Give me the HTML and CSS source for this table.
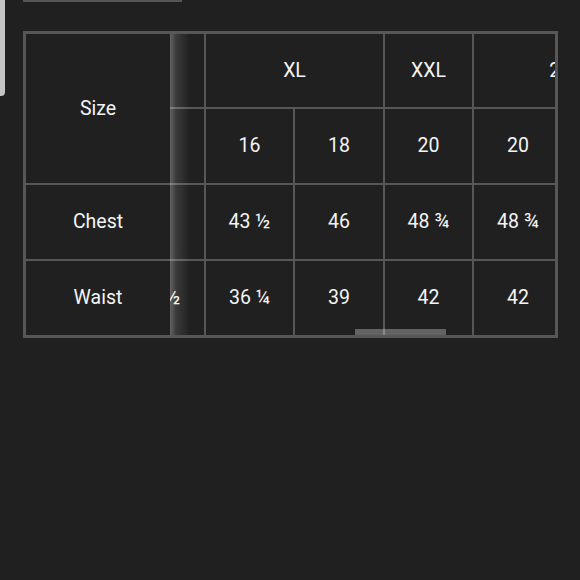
FILE: index.html
```html
<!DOCTYPE html>
<html>
<head>
<meta charset="utf-8">
<link rel="stylesheet" href="styles.css">
</head>
<body>
<div class="page">
  <div class="side-tab"></div>
  <div class="content">
    <div class="top-bar"></div>
    <div class="size-table">
      <div class="fixed-col">
        <div class="cell head-size">Size</div>
        <div class="cell">Chest</div>
        <div class="cell">Waist</div>
      </div>
      <div class="scroll-view">
        <div class="scroll-grid">
          <div class="cell"></div>
          <div class="cell span2">XL</div>
          <div class="cell">XXL</div>
          <div class="cell span2">2XL</div>

          <div class="cell"></div>
          <div class="cell">16</div>
          <div class="cell">18</div>
          <div class="cell">20</div>
          <div class="cell">20</div>
          <div class="cell">22</div>

          <div class="cell"></div>
          <div class="cell">43 ½</div>
          <div class="cell">46</div>
          <div class="cell">48 ¾</div>
          <div class="cell">48 ¾</div>
          <div class="cell">51</div>

          <div class="cell">34 ½</div>
          <div class="cell">36 ¼</div>
          <div class="cell">39</div>
          <div class="cell">42</div>
          <div class="cell">42</div>
          <div class="cell">45</div>
        </div>
        <div class="shade"></div>
      </div>
      <div class="scroll-thumb"></div>
    </div>
  </div>
</div>
</body>
</html>
```
FILE: styles.css
```css
html, body {
  margin: 0;
  padding: 0;
  background: #202020;
  width: 580px;
  height: 580px;
  overflow: hidden;
}

.page {
  display: flex;
  align-items: flex-start;
  font-family: Roboto, "Noto Sans", sans-serif;
  font-size: 19.5px;
  color: #f4f4f4;
}

.side-tab {
  width: 5px;
  height: 96px;
  background: #c4c4c4;
  border-bottom-right-radius: 4px;
  flex: none;
}

.content {
  margin-left: 18px;
  display: flex;
  flex-direction: column;
}

.top-bar {
  width: 159px;
  height: 2px;
  background: #555555;
}

.size-table {
  margin-top: 29px;
  width: 529px;
  border: 3px solid #575757;
  display: flex;
  position: relative;
  background: #575757;
}

.fixed-col {
  width: 144px;
  flex: none;
  display: grid;
  grid-template-rows: 149px 74px 74px;
  row-gap: 2px;
  background: #575757;
}

.cell {
  background: #202020;
  display: flex;
  align-items: center;
  justify-content: center;
  white-space: nowrap;
  padding-bottom: 1px;
  box-sizing: border-box;
}

.scroll-view {
  width: 385px;
  flex: none;
  overflow: hidden;
  position: relative;
  background: #202020;
}

.scroll-grid {
  margin-left: -55px;
  display: grid;
  grid-template-columns: 89px 87px 88px 87px 88px 94px;
  grid-template-rows: 73px 74px 74px 74px;
  gap: 2px;
  background: #575757;
  width: max-content;
}

.span2 {
  grid-column: span 2;
}

.shade {
  position: absolute;
  left: 0;
  top: 0;
  bottom: 0;
  width: 20px;
  background: linear-gradient(to right, rgba(255,255,255,0.3), rgba(255,255,255,0.12) 6px, rgba(255,255,255,0));
}

.scroll-thumb {
  position: absolute;
  left: 329px;
  top: 295px;
  width: 91px;
  height: 6px;
  background: rgba(255,255,255,0.3);
}
```
